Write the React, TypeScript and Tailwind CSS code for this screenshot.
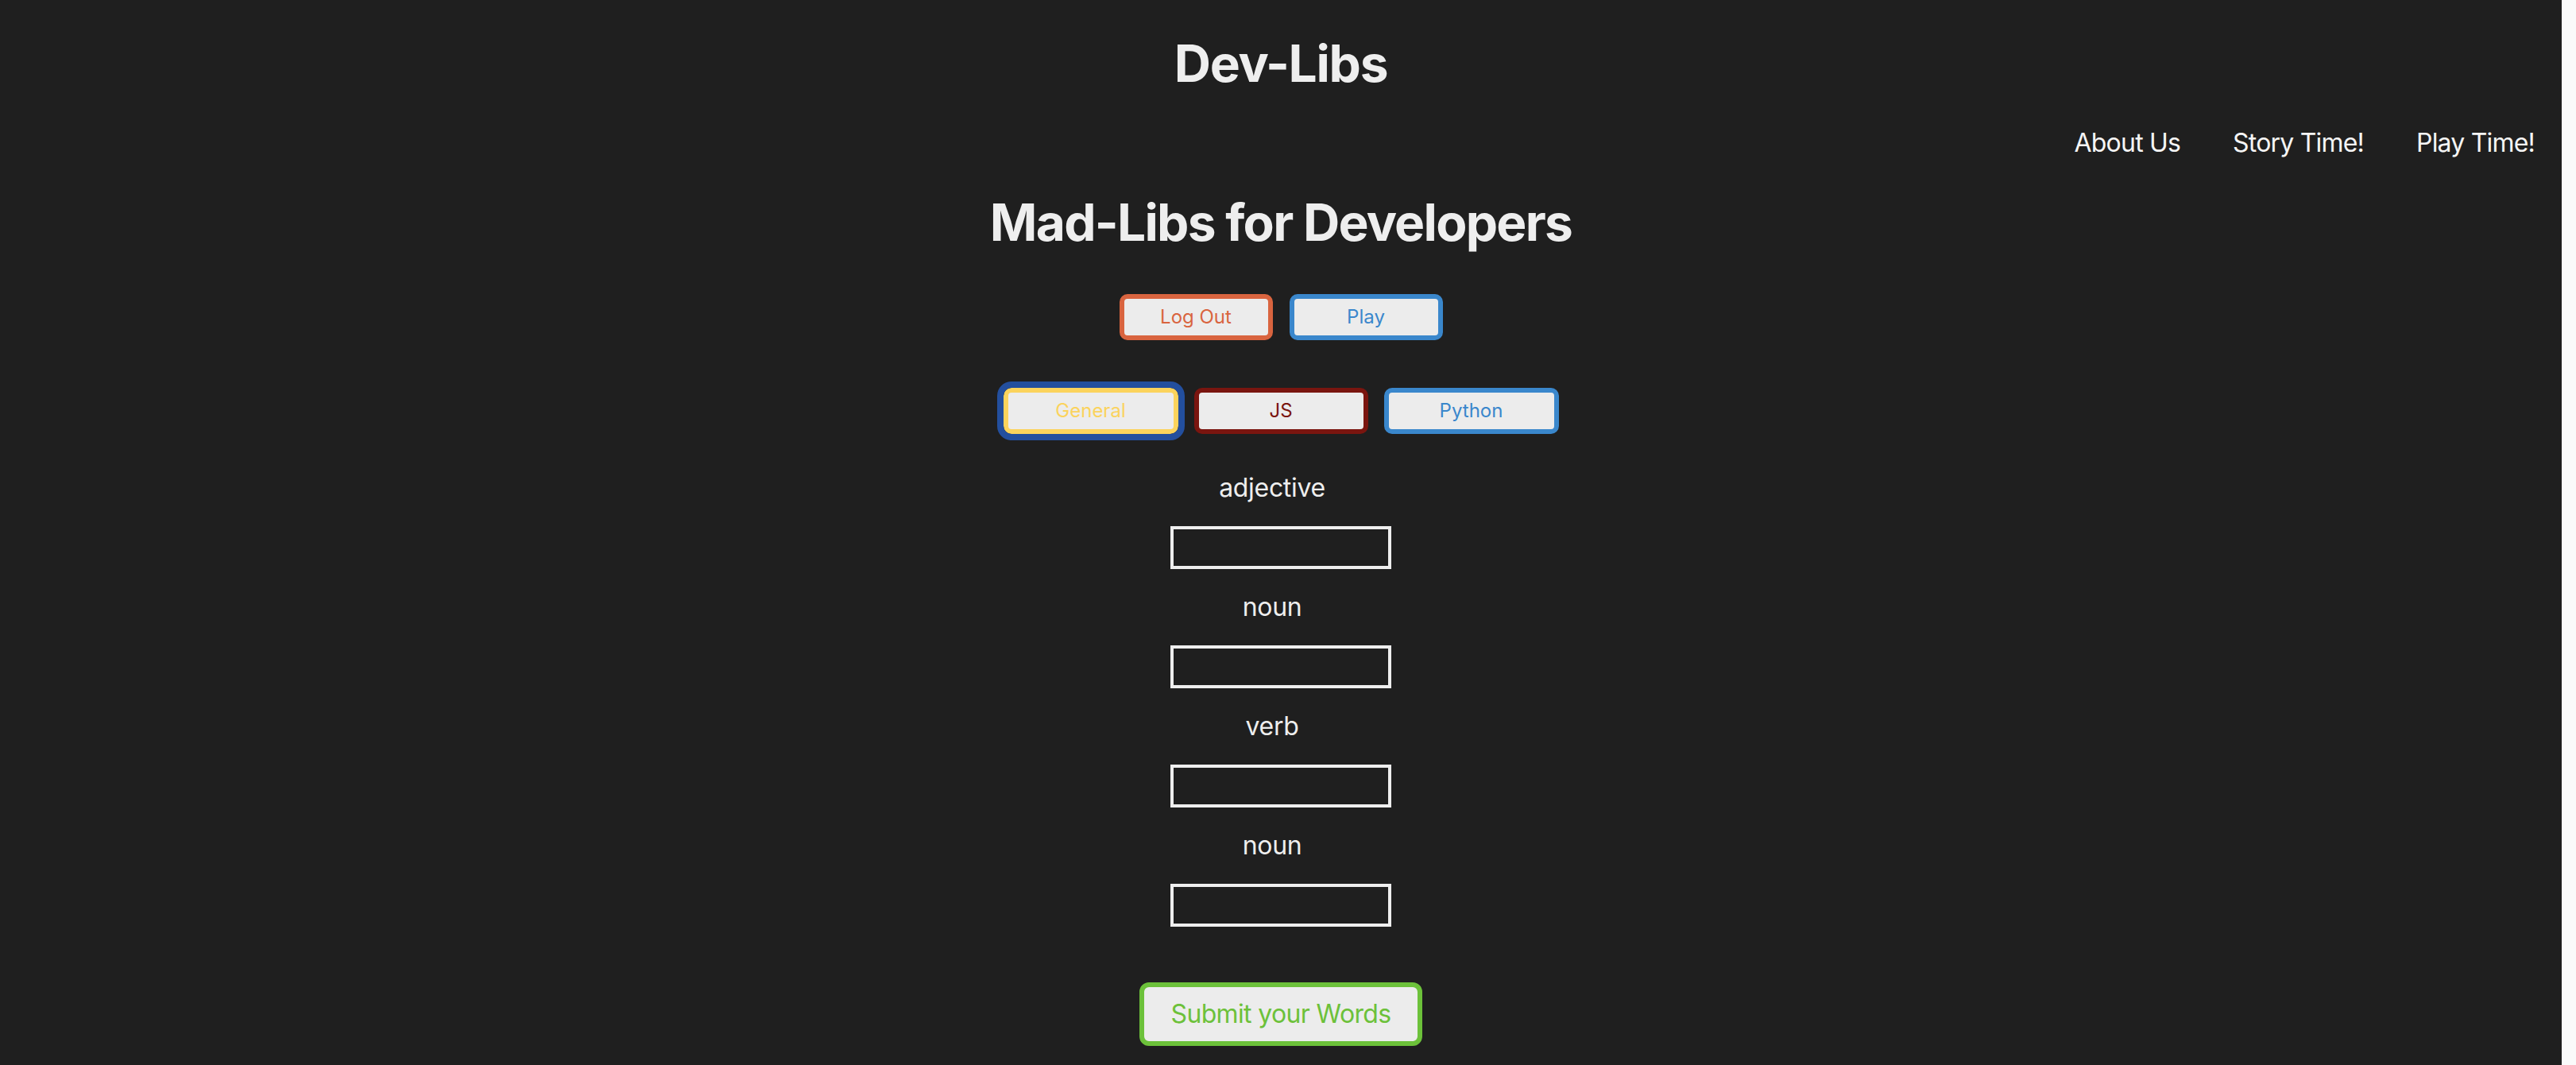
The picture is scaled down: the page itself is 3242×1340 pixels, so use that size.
import React from "react";

const fields = ["adjective", "noun", "verb", "noun"];

export default function App() {
  return (
    <div className="flex h-[1340px] w-full overflow-hidden bg-[#1f1f1f] font-['Inter',sans-serif] text-[#eeeeee]">
      <div className="flex flex-1 flex-col items-center">
        <h1 className="mt-[48px] text-[64px] font-bold leading-[64px] tracking-[-0.02em] text-[#eeeeee]">Dev-Libs</h1>
        <nav className="mt-[52px] flex w-full justify-end gap-[66px] pr-[34px] text-[32px] leading-[32px] tracking-[-0.025em] text-[#f5f5f5]">
          <a>About Us</a>
          <a>Story Time!</a>
          <a>Play Time!</a>
        </nav>
        <h2 className="mt-[52px] text-[64px] font-bold leading-[64px] tracking-[-0.027em] text-[#eeeeee]">Mad-Libs for Developers</h2>
        <div className="mt-[58px] flex gap-[21px]">
          <button className="h-[58px] w-[193px] rounded-[10px] border-[6px] border-[#d9643f] bg-[#ececec] text-[24px] text-[#d9643f]">Log Out</button>
          <button className="h-[58px] w-[193px] rounded-[10px] border-[6px] border-[#3a87cc] bg-[#ececec] text-[24px] text-[#3a87cc]">Play</button>
        </div>
        <div className="mt-[60px] flex gap-[20px]">
          <button className="h-[58px] w-[220px] rounded-[10px] border-[6px] border-[#fbd35c] bg-[#ececec] text-[24px] text-[#fbd35c] outline-[8px] outline-solid outline-[#234f9e]">General</button>
          <button className="h-[58px] w-[219px] rounded-[10px] border-[6px] border-[#7a150f] bg-[#ececec] text-[24px] text-[#7a150f]">JS</button>
          <button className="h-[58px] w-[220px] rounded-[10px] border-[6px] border-[#3a87cc] bg-[#ececec] text-[24px] text-[#3a87cc]">Python</button>
        </div>
        <form className="mt-[52px] flex flex-col items-center">
          {fields.map((f, i) => (
            <div key={i} className={`flex flex-col items-center ${i > 0 ? "mt-[32px]" : ""}`}>
              <label className="pr-[22px] text-[32px] leading-[32px] tracking-[-0.01em] text-[#eeeeee]">{f}</label>
              <input className="mt-[32px] h-[54px] w-[278px] border-4 border-[#eeeeee] bg-transparent text-[24px] text-[#eeeeee] outline-none" />
            </div>
          ))}
          <button type="button" className="mt-[70px] h-[80px] w-[356px] rounded-[12px] border-[6px] border-[#6cc13a] bg-[#ececec] text-[32px] tracking-[-0.02em] text-[#6cc13a]">Submit your Words</button>
        </form>
      </div>
      <div className="h-full w-[18px] bg-[#fafafa]" />
    </div>
  );
}
